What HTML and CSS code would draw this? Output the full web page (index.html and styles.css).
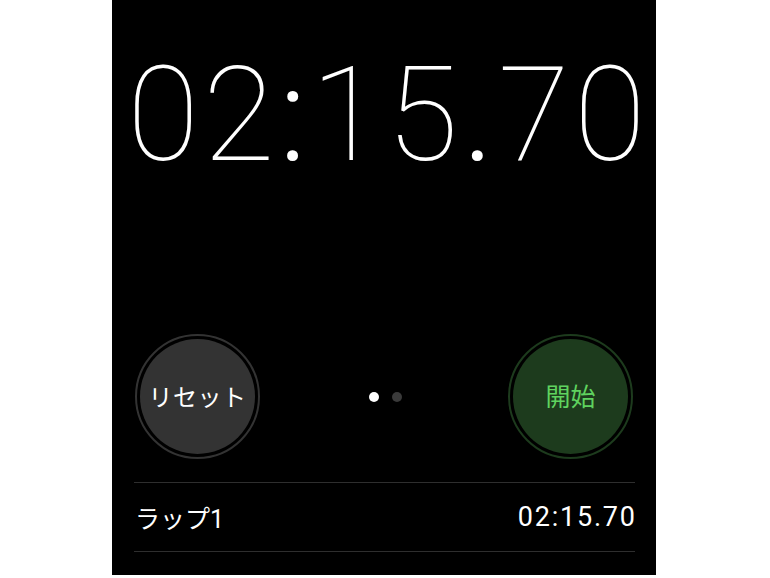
FILE: index.html
```html
<!DOCTYPE html>
<html lang="ja">
<head>
<meta charset="utf-8">
<link rel="stylesheet" href="styles.css">
</head>
<body>
<div class="screen">
  <div class="time">02<span class="sep">:</span>15<span class="sep">.</span>70</div>
  <div class="controls">
    <div class="btn btn-reset"><div class="btn-inner">リセット</div></div>
    <div class="dots"><span class="dot on"></span><span class="dot"></span></div>
    <div class="btn btn-start"><div class="btn-inner">開始</div></div>
  </div>
  <div class="laps">
    <div class="lap"><span class="lap-name">ラップ1</span><span class="lap-time">02:15.70</span></div>
  </div>
</div>
</body>
</html>
```
FILE: styles.css
```css
html, body { margin: 0; padding: 0; background: #fff; }
body { width: 770px; height: 578px; overflow: hidden; }
.screen {
  margin-left: 112px;
  width: 544px;
  height: 575px;
  background: #000;
  display: flex;
  flex-direction: column;
  font-family: "Roboto", "Noto Sans CJK JP", sans-serif;
  color: #fff;
}
.time {
  margin-top: 49px;
  height: 133px;
  font-size: 131px;
  font-weight: 100;
  line-height: 133px;
  text-align: center;
  letter-spacing: 4.2px;
  text-indent: 9px;
  font-variant-numeric: tabular-nums;
  white-space: nowrap;
}
.time .sep { font-weight: 300; }
.controls {
  margin-top: 152px;
  padding: 0 23px;
  display: flex;
  justify-content: space-between;
  align-items: center;
}
.btn {
  width: 115px;
  height: 115px;
  border-radius: 50%;
  border: 2px solid;
  padding: 3px;
  box-sizing: content-box;
  display: flex;
}
.btn-inner {
  flex: 1;
  border-radius: 50%;
  display: flex;
  align-items: center;
  justify-content: center;
  font-size: 24px;
  font-family: "Noto Sans CJK JP", sans-serif;
  padding-bottom: 3px;
}
.btn-reset { border-color: #333; }
.btn-reset .btn-inner { background: #333; color: #fff; letter-spacing: 0.5px; }
.btn-start { border-color: #1d3b1d; }
.btn-start .btn-inner { background: #1d3b1d; color: #5fd35f; font-size: 25px; }
.dots { display: flex; gap: 13px; margin-left: 2px; }
.dot { width: 10px; height: 10px; border-radius: 50%; background: #3a3a3a; }
.dot.on { background: #fff; }
.laps {
  margin-top: 23px;
  padding: 0 21px 0 22px;
}
.lap {
  height: 68px;
  border-top: 1px solid #2e2e2e;
  border-bottom: 1px solid #2e2e2e;
  display: flex;
  justify-content: space-between;
  align-items: center;
}
.lap-name { font-family: "Roboto", "Noto Sans CJK JP", sans-serif; font-size: 25px; margin-left: 1px; }
.lap-time { font-size: 27px; letter-spacing: 1.8px; margin-right: -1.8px; font-variant-numeric: tabular-nums; }
```
